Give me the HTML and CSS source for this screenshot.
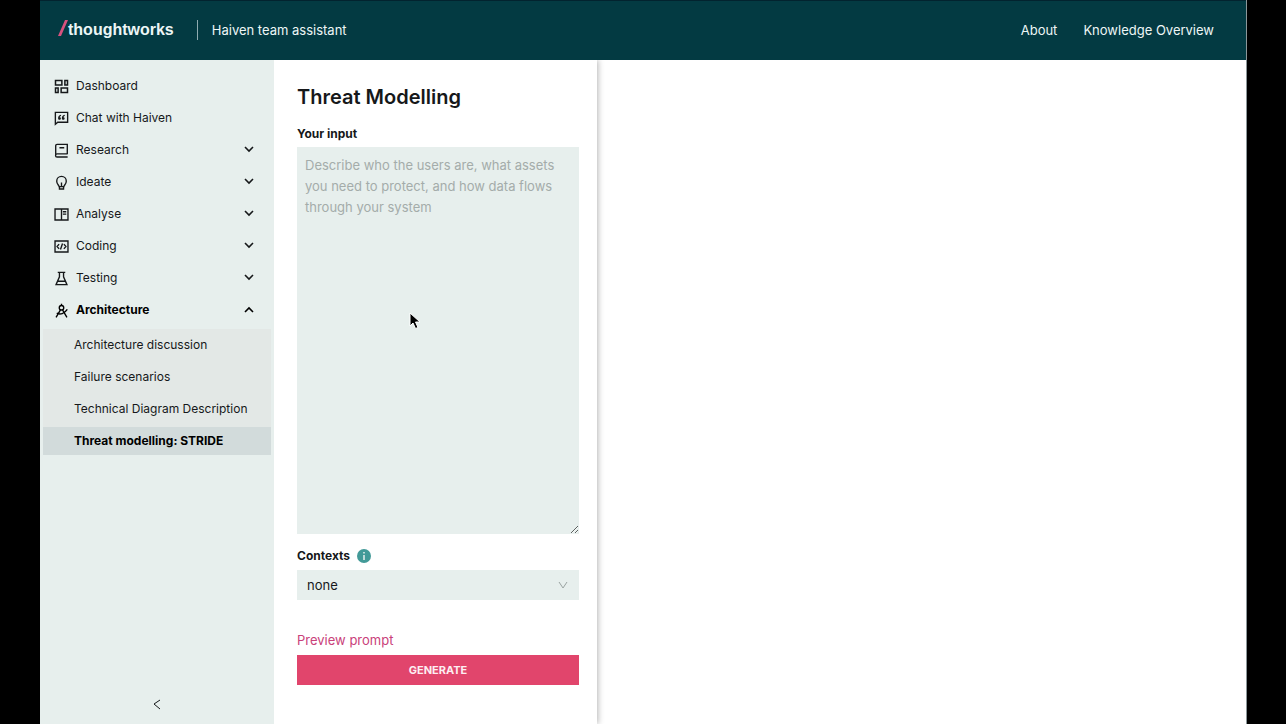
FILE: index.html
```
<!DOCTYPE html>
<html lang="en">

<head>
    <meta charset="UTF-8">
    <meta name="viewport" content="width=device-width, initial-scale=1">
    <title>Haiven team assistant</title>
    <link rel="stylesheet" href="styles.css">
</head>

<body>
    <div class="app">
        <header class="header">
            <a class="logo" href="#">
                <svg class="slash" viewBox="0 0 10 16" aria-hidden="true"><path d="M7 0h3L3 16H0z" /></svg>
                <span>thoughtworks</span>
            </a>
            <span class="tagline">Haiven team assistant</span>
            <nav class="header-links">
                <a href="#">About</a>
                <a href="#">Knowledge Overview</a>
            </nav>
        </header>

        <div class="content">
            <aside class="sidebar">
                <nav class="menu">
                    <a class="menu-item" href="#">
                        <svg class="icon" viewBox="2 2 20 20"><path d="M4 4h8.500v6H4zM16.500 4H20v6h-3.500zM4 14h3.500v6H4zM11.500 14H20v6h-8.500z" /></svg>
                        <span>Dashboard</span>
                    </a>
                    <a class="menu-item" href="#">
                        <svg class="icon" viewBox="1 2 22 22"><path d="M3 21.500V4h18v14.500H6.500z" /><path class="fill" d="M11 7.600c-2.600.9-4 2.500-4 4.900 0 1.500.9 2.500 2.100 2.500s2-.8 2-1.900-.8-1.900-1.900-1.900c.2-1 1-1.800 2.300-2.400zM16.500 7.600c-2.600.9-4 2.500-4 4.900 0 1.500.9 2.500 2.100 2.500s2-.8 2-1.900-.8-1.900-1.900-1.900c.2-1 1-1.800 2.300-2.400z" /></svg>
                        <span>Chat with Haiven</span>
                    </a>
                    <button class="menu-item" type="button">
                        <svg class="icon" viewBox="1 1 22 22"><path d="M20.500 17H5.500a2 2 0 0 0 0 4.500h15.500M20.500 17.500V3H5.500A2 2 0 0 0 3.500 5v14M9 8h7" /></svg>
                        <span>Research</span>
                        <svg class="arrow" viewBox="0 0 12 12"><path d="M2 3l4 4 4-4" /></svg>
                    </button>
                    <button class="menu-item" type="button">
                        <svg class="icon" viewBox="1 1 22 22"><path d="M8.500 18c0-2-3.500-3.500-3.500-8a7 7 0 0 1 14 0c0 4.500-3.500 6-3.500 8zM12 12v6M9 18v3.500h6V18" /></svg>
                        <span>Ideate</span>
                        <svg class="arrow" viewBox="0 0 12 12"><path d="M2 3l4 4 4-4" /></svg>
                    </button>
                    <button class="menu-item" type="button">
                        <svg class="icon" viewBox="1 1 22 22"><path d="M2.500 4h19v16h-19zM12 4v16M14 8h5M14 11.500h5" /></svg>
                        <span>Analyse</span>
                        <svg class="arrow" viewBox="0 0 12 12"><path d="M2 3l4 4 4-4" /></svg>
                    </button>
                    <button class="menu-item" type="button">
                        <svg class="icon" viewBox="1 1 22 22"><path d="M2.500 4h19v16h-19zM8.500 8.500L5.500 12l3 3.500M15.500 8.500l3 3.500-3 3.500M13.500 7.500l-3 9" /></svg>
                        <span>Coding</span>
                        <svg class="arrow" viewBox="0 0 12 12"><path d="M2 3l4 4 4-4" /></svg>
                    </button>
                    <button class="menu-item" type="button">
                        <svg class="icon" viewBox="1 1 22 22"><path d="M6.500 3h11M9 3v6.500L4 21h16L15 9.500V3M7 16h10" /></svg>
                        <span>Testing</span>
                        <svg class="arrow" viewBox="0 0 12 12"><path d="M2 3l4 4 4-4" /></svg>
                    </button>
                    <button class="menu-item open" type="button" aria-expanded="true">
                        <svg class="icon" viewBox="1 1 22 22"><path d="M12 2v3M10.500 11L4 22M13.500 11L20 22M5 16c5 2.500 11.500.5 15.500-5.500" /><circle cx="12" cy="8" r="3.300" /></svg>
                        <span>Architecture</span>
                        <svg class="arrow" viewBox="0 0 12 12"><path d="M2 8l4-4 4 4" /></svg>
                    </button>
                    <div class="submenu">
                        <a href="#">Architecture discussion</a>
                        <a href="#">Failure scenarios</a>
                        <a href="#">Technical Diagram Description</a>
                        <a class="selected" href="#">Threat modelling: STRIDE</a>
                    </div>
                </nav>
                <button class="collapse" type="button" aria-label="Collapse menu">
                    <svg viewBox="0 0 12 12"><path d="M9 2L3 6l6 5" /></svg>
                </button>
            </aside>

            <form class="prompt-form">
                <h1>Threat Modelling</h1>
                <label for="input">Your input</label>
                <textarea id="input" placeholder="Describe who the users are, what assets you need to protect, and how data flows through your system"></textarea>
                <div class="label-row">
                    <label for="contexts">Contexts</label>
                    <svg class="info" viewBox="0 0 14 14"><circle cx="7" cy="7" r="7" /><path d="M7 6v5M7 3v1.500" /></svg>
                </div>
                <div class="select">
                    <select id="contexts">
                        <option>none</option>
                    </select>
                    <svg viewBox="0 0 12 12"><path d="M2 3l4 6 4-6" /></svg>
                </div>
                <a class="preview" href="#">Preview prompt</a>
                <button class="generate" type="button">GENERATE</button>
            </form>

            <main class="results"></main>
        </div>
    </div>

    <svg class="cursor" viewBox="0 0 12 18" aria-hidden="true"><path d="M1 1v13l3-3 2.500 5.500 2.500-1L6.500 10H11z" /></svg>
</body>

</html>
```
FILE: styles.css
```
* {
    box-sizing: border-box;
}

body {
    margin: 0;
    background-color: #000;
    color: #16181a;
    font-family: Inter, sans-serif;
    font-size: 13px;
    line-height: 20px;
}

a {
    color: inherit;
    text-decoration: none;
}

button,
select,
textarea {
    font: inherit;
    color: inherit;
    border: 0;
    border-radius: 0;
    margin: 0;
}

button {
    background: none;
    cursor: pointer;
}

svg {
    display: block;
    fill: none;
    stroke: currentColor;
}

.app {
    display: flex;
    flex-direction: column;
    min-height: 100vh;
    margin: 0 39px 0 40px;
    background-color: #fff;
    border-right: 1px solid #8b9699;
}

.header {
    display: flex;
    align-items: center;
    height: 60px;
    padding: 0 32px 0 18px;
    background-color: #033a42;
    box-shadow: inset 0 1px #02232f;
    color: #edf6f6;
}

.logo {
    display: flex;
    align-items: center;
    font-family: "Liberation Sans", Arial, sans-serif;
    font-size: 16px;
    font-weight: 700;
}

.slash {
    width: 10px;
    height: 16px;
    margin-bottom: 4px;
    fill: #d8527f;
    stroke: none;
}

.tagline {
    margin-left: 23px;
    padding-left: 14px;
    border-left: 1px solid #8fabb0;
}

.header-links {
    display: flex;
    gap: 26px;
    margin-left: auto;
}

.content {
    display: flex;
    flex: 1;
}

/* sidebar */

.sidebar {
    display: flex;
    flex-direction: column;
    flex: none;
    width: 234px;
    padding: 10px 3px;
    background-color: #e7efed;
    font-size: 12px;
}

.menu-item {
    display: flex;
    align-items: center;
    gap: 7px;
    width: 100%;
    height: 32px;
    padding: 0 16px 0 11px;
    text-align: left;
}

.open {
    font-weight: 700;
    color: #000;
}

.icon {
    width: 15px;
    height: 15px;
    stroke-width: 2;
}

.icon .fill {
    fill: currentColor;
    stroke: none;
}

.arrow {
    width: 12px;
    height: 12px;
    margin-left: auto;
    stroke-width: 1.600;
}

.submenu {
    display: flex;
    flex-direction: column;
    gap: 4px;
    margin-top: 3px;
    padding-top: 2px;
    background-color: #e3e8e6;
}

.submenu a {
    height: 28px;
    padding-left: 31px;
    line-height: 28px;
}

.submenu .selected {
    background-color: #d2dbdb;
    color: #000;
    font-weight: 700;
}

.collapse {
    align-self: center;
    margin-top: auto;
    padding: 4px;
}

.collapse svg {
    width: 12px;
    height: 12px;
}

/* form */

.prompt-form {
    display: flex;
    flex-direction: column;
    flex: none;
    width: 323px;
    padding: 22px 18px 39px 23px;
    box-shadow: 1px 0 6px rgba(0, 0, 0, 0.3);
    clip-path: inset(0 -10px 0 0);
}

h1 {
    margin: 0 0 12px;
    font-size: 20px;
    font-weight: 600;
    line-height: 30px;
}

label {
    font-size: 12px;
    font-weight: 700;
}

textarea {
    flex: 1;
    min-height: 120px;
    margin-top: 3px;
    padding: 8px;
    background-color: #e7efed;
    line-height: 21px;
    resize: vertical;
}

textarea::placeholder {
    color: #a4acaa;
}

.label-row {
    display: flex;
    align-items: center;
    gap: 7px;
    margin: 12px 0 4px;
}

.info {
    width: 14px;
    height: 14px;
    fill: #429a98;
    stroke: none;
}

.info path {
    stroke: #e7efed;
    stroke-width: 1.500;
}

.select {
    position: relative;
    margin-bottom: 30px;
}

.select select {
    display: block;
    width: 100%;
    height: 30px;
    padding: 0 10px;
    background-color: #e7efed;
    appearance: none;
}

.select svg {
    position: absolute;
    top: 9px;
    right: 10px;
    width: 12px;
    height: 12px;
    color: #9aa3a1;
    pointer-events: none;
}

.preview {
    align-self: flex-start;
    margin-bottom: 5px;
    color: #c9417a;
}

.generate {
    height: 30px;
    background-color: #e1456c;
    color: #fdeef2;
    font-size: 11px;
    font-weight: 700;
}

.results {
    flex: 1;
}

.cursor {
    position: absolute;
    top: 312px;
    left: 409px;
    width: 12px;
    height: 18px;
    fill: #000;
    stroke: #fff;
    pointer-events: none;
}
```
